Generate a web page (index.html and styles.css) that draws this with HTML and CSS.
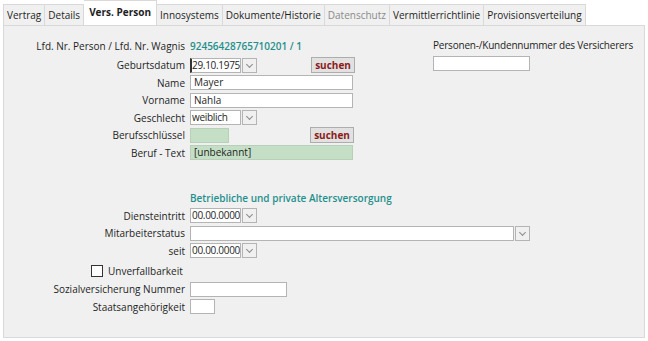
FILE: index.html
```html
<!DOCTYPE html>
<html lang="de">
<head>
    <meta charset="UTF-8">
    <title>Vers. Person</title>
    <link rel="stylesheet" href="styles.css">
</head>
<body>

    <div class="tabs">
        <div class="tab">Vertrag</div>
        <div class="tab">Details</div>
        <div class="tab active">Vers. Person</div>
        <div class="tab">Innosystems</div>
        <div class="tab">Dokumente/Historie</div>
        <div class="tab disabled">Datenschutz</div>
        <div class="tab">Vermittlerrichtlinie</div>
        <div class="tab">Provisionsverteilung</div>
    </div>

    <div class="panel">
        <div class="top">
            <div class="form">
                <div class="row first">
                    <label>Lfd. Nr. Person / Lfd. Nr. Wagnis</label>
                    <span class="value">92456428765710201 / 1</span>
                </div>
                <div class="row gap">
                    <label>Geburtsdatum</label>
                    <div class="combo"><span class="text caret">29.10.1975</span><span class="drop"></span></div>
                    <button class="search">suchen</button>
                </div>
                <div class="row">
                    <label>Name</label>
                    <div class="field wide">Mayer</div>
                </div>
                <div class="row">
                    <label>Vorname</label>
                    <div class="field wide">Nahla</div>
                </div>
                <div class="row">
                    <label>Geschlecht</label>
                    <div class="combo"><span class="text">weiblich</span><span class="drop"></span></div>
                </div>
                <div class="row">
                    <label>Berufsschlüssel</label>
                    <div class="field green short"></div>
                    <button class="search second">suchen</button>
                </div>
                <div class="row">
                    <label>Beruf - Text</label>
                    <div class="field wide green">[unbekannt]</div>
                </div>
            </div>

            <div class="side">
                <div class="side-label">Personen-/Kundennummer des Versicherers</div>
                <div class="field kunden"></div>
            </div>
        </div>

        <div class="form lower">
            <div class="row">
                <label></label>
                <span class="heading">Betriebliche und private Altersversorgung</span>
            </div>
            <div class="row">
                <label>Diensteintritt</label>
                <div class="combo"><span class="text">00.00.0000</span><span class="drop"></span></div>
            </div>
            <div class="row">
                <label>Mitarbeiterstatus</label>
                <div class="combo status"><span class="text"></span><span class="drop"></span></div>
            </div>
            <div class="row">
                <label>seit</label>
                <div class="combo"><span class="text">00.00.0000</span><span class="drop"></span></div>
            </div>
            <div class="row check-row">
                <span class="check"></span>
                <span class="check-label">Unverfallbarkeit</span>
            </div>
            <div class="row">
                <label>Sozialversicherung Nummer</label>
                <div class="field sv"></div>
            </div>
            <div class="row">
                <label>Staatsangehörigkeit</label>
                <div class="field tiny"></div>
            </div>
        </div>
    </div>

</body>
</html>
```

FILE: styles.css
```css
body {
    margin: 0;
    background: #ffffff;
    font-family: "Open Sans", "Noto Sans", sans-serif;
    font-size: 10px;
    color: #1e1e1e;
    white-space: nowrap;
}

.tabs {
    display: flex;
    align-items: flex-end;
    height: 25px;
    padding-left: 3px;
}

.tab {
    height: 21px;
    line-height: 20px;
    padding: 0 3px;
    background: #f0f0f0;
    border: 1px solid #d9d9d9;
    border-bottom: none;
    border-left: none;
    box-sizing: border-box;
}

.tab:first-child {
    border-left: 1px solid #d9d9d9;
}

.tab.active {
    height: 25px;
    line-height: 22px;
    background: #ffffff;
    font-weight: bold;
    padding: 0 5px;
}

.tab.disabled {
    color: #8a8a8a;
}

.panel {
    margin: 0 3px 0 3px;
    height: 313px;
    background: #f0f0f0;
    border: 1px solid #d9d9d9;
    box-sizing: border-box;
}

.top {
    display: flex;
}

.form {
    width: 403px;
}

.row {
    display: flex;
    align-items: center;
    height: 17.5px;
}

.row.first {
    margin-top: 11px;
}

.row.gap {
    margin-top: 2px;
}

.row label {
    width: 181px;
    margin-right: 5px;
    text-align: right;
    flex-shrink: 0;
}

.value {
    color: #1f8f8c;
    font-weight: 600;
}

.heading {
    color: #1f8f8c;
    font-weight: 600;
}

.field {
    height: 15px;
    line-height: 13px;
    padding: 0 3px;
    background: #ffffff;
    border: 1px solid #b4b4b4;
    box-sizing: border-box;
}

.field.wide {
    width: 163px;
}

.field.short {
    width: 39px;
}

.field.green {
    background: #c5dfc6;
    border-color: #b8cfb8;
}

.combo {
    display: flex;
    height: 15px;
}

.combo .text {
    width: 51px;
    line-height: 13px;
    padding: 0 1px;
    letter-spacing: -0.3px;
    background: #ffffff;
    border: 1px solid #b4b4b4;
    box-sizing: border-box;
    overflow: hidden;
}

.combo .caret {
    border-left: 2px solid #333333;
    padding-left: 0;
}

.combo .drop {
    position: relative;
    width: 15px;
    margin-left: 1px;
    background: #f0f0f0;
    border: 1px solid #b4b4b4;
    box-sizing: border-box;
}

.combo .drop::after {
    content: "";
    position: absolute;
    left: 4px;
    top: 3px;
    width: 4px;
    height: 4px;
    border-right: 1px solid #8a8a8a;
    border-bottom: 1px solid #8a8a8a;
    transform: rotate(45deg);
}

.combo.status .text {
    width: 324px;
}

.search {
    margin-left: 54px;
    width: 44px;
    height: 16px;
    padding: 0;
    font-family: inherit;
    font-size: 10px;
    font-weight: bold;
    color: #8b1a1a;
    background: #e1e1e1;
    border: 1px solid #adadad;
}

.search.second {
    margin-left: 81px;
}

.side {
    margin-left: 26px;
    padding-top: 12px;
}

.side-label {
    height: 18px;
    letter-spacing: -0.2px;
}

.field.kunden {
    width: 97px;
}

.lower {
    width: 600px;
    margin-top: 28px;
}

.check-row {
    margin-top: 1px;
    height: 20px;
}

.check {
    width: 12px;
    height: 12px;
    margin-left: 87px;
    background: #ffffff;
    border: 1px solid #333333;
    box-sizing: border-box;
}

.check-label {
    margin-left: 5px;
}

.field.sv {
    width: 97px;
}

.field.tiny {
    width: 25px;
}
```
